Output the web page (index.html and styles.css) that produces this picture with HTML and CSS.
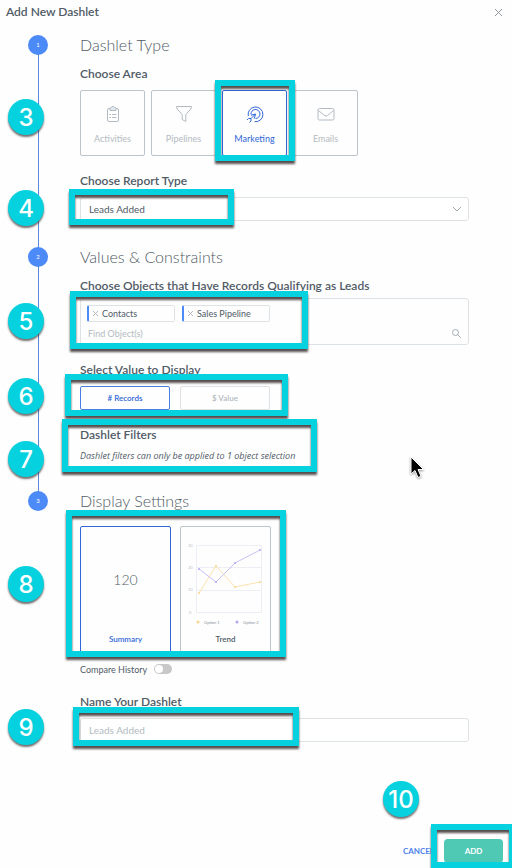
FILE: index.html
```
<!DOCTYPE html>
<html lang="en">

<head>
    <meta charset="UTF-8">
    <meta name="viewport" content="width=device-width, initial-scale=1.0">
    <title>Add New Dashlet</title>
    <link rel="stylesheet" href="styles.css">
</head>

<body>
    <header class="topbar">
        <h1>Add New Dashlet</h1>
        <button class="close" type="button" aria-label="Close">
            <svg width="9" height="9" viewBox="0 0 9 9"><path d="M1 1l7 7M8 1L1 8" /></svg>
        </button>
    </header>

    <form class="dashlet-form">

        <!-- step 1 -->
        <section class="step">
            <span class="bullet">1</span>
            <h2>Dashlet Type</h2>

            <div class="field">
                <h3>Choose Area</h3>
                <div class="areas">
                    <button class="area" type="button">
                        <svg width="18" height="18" viewBox="0 0 18 18">
                            <rect x="3.500" y="3.500" width="11" height="13" rx="1.500" />
                            <path class="clip" d="M6 5.500V3.500Q6 2.500 7.200 2.500Q7.500 1.500 9 1.500T10.800 2.500Q12 2.500 12 3.500V5.500Z" />
                            <path d="M5.500 9.500h1.500M8 9.500h4.500M5.500 12.500h1.500M8 12.500h4.500" />
                        </svg>
                        Activities
                    </button>
                    <button class="area" type="button">
                        <svg width="18" height="18" viewBox="0 0 18 18">
                            <path d="M1.500 1.500H16.500L15.800 4L10.800 9.500V16.500L7.200 14.500V9.500L2.200 4Z" />
                        </svg>
                        Pipelines
                    </button>
                    <button class="area selected" type="button">
                        <svg width="18" height="18" viewBox="0 0 18 18">
                            <path d="M2.300 11A7.400 7.400 0 1 1 8.500 16.700" />
                            <path d="M5 9.500A4.500 4.500 0 1 1 9.500 13.500" />
                            <path d="M9.500 9L5 13.500M9.500 9L5 10.200M9.500 9L8.300 13.500M5 13.500V16L3.500 17.500M5 13.500H2.500L1 15" />
                        </svg>
                        Marketing
                    </button>
                    <button class="area" type="button">
                        <svg width="18" height="18" viewBox="0 0 18 18">
                            <rect x="1" y="3.500" width="16" height="11.500" rx="1.500" />
                            <path d="M1.500 5.500L7.500 10.500Q9 11.700 10.500 10.500L16.500 5.500" />
                        </svg>
                        Emails
                    </button>
                </div>
                <span class="frame frame-3"></span>
                <span class="badge badge-3">3</span>
            </div>

            <div class="field">
                <label for="report">Choose Report Type</label>
                <div class="select-box">
                    <select id="report">
                        <option>Leads Added</option>
                    </select>
                    <svg width="10" height="6" viewBox="0 0 10 6"><path d="M1 1l4 4 4-4" /></svg>
                </div>
                <span class="frame frame-4"></span>
                <span class="badge badge-4">4</span>
            </div>
        </section>

        <!-- step 2 -->
        <section class="step">
            <span class="bullet">2</span>
            <h2>Values &amp; Constraints</h2>

            <div class="field tight">
                <label for="objects">Choose Objects that Have Records Qualifying as Leads</label>
                <div class="objects">
                    <div class="tags">
                        <span class="tag"><button type="button" aria-label="Remove Contacts"><svg width="5" height="5" viewBox="0 0 5 5"><path d="M0 0l5 5M5 0L0 5" /></svg></button>Contacts</span>
                        <span class="tag"><button type="button" aria-label="Remove Sales Pipeline"><svg width="5" height="5" viewBox="0 0 5 5"><path d="M0 0l5 5M5 0L0 5" /></svg></button>Sales Pipeline</span>
                    </div>
                    <div class="search">
                        <input id="objects" type="text" placeholder="Find Object(s)">
                        <svg width="9" height="9" viewBox="0 0 9 9"><circle cx="3.500" cy="3.500" r="3" /><path d="M5.700 5.700L8.700 8.700" /></svg>
                    </div>
                </div>
                <span class="frame frame-5"></span>
                <span class="badge badge-5">5</span>
            </div>

            <div class="field">
                <h3>Select Value to Display</h3>
                <div class="values">
                    <button class="value selected" type="button"># Records</button>
                    <button class="value" type="button">$ Value</button>
                </div>
                <span class="frame frame-6"></span>
                <span class="badge badge-6">6</span>
            </div>

            <div class="field tight">
                <h3>Dashlet Filters</h3>
                <p class="note">Dashlet filters can only be applied to 1 object selection</p>
                <span class="frame frame-7"></span>
                <span class="badge badge-7">7</span>
            </div>
        </section>

        <!-- step 3 -->
        <section class="step">
            <span class="bullet">3</span>
            <h2>Display Settings</h2>

            <div class="field displays-field">
                <div class="displays">
                    <button class="display selected" type="button">
                        <span class="total">120</span>
                        <span class="name">Summary</span>
                    </button>
                    <button class="display" type="button">
                        <svg class="chart" width="76" height="86" viewBox="0 0 76 86">
                            <path class="grid" d="M8.500 2.500H73.500V69.500H8.500ZM8.500 24.500H73.500M8.500 47.500H73.500" />
                            <g class="ticks">
                                <text x="0" y="4">30</text>
                                <text x="0" y="26">20</text>
                                <text x="0" y="48">10</text>
                                <text x="1" y="71">0</text>
                            </g>
                            <path class="one" d="M11 50L28 23L47 44L72 39" />
                            <path class="two" d="M11 26L28 39L47 20L72 7" />
                            <g class="dots-one"><circle cx="11" cy="50" r="1" /><circle cx="28" cy="23" r="1" /><circle cx="47" cy="44" r="1" /><circle cx="72" cy="39" r="1" /></g>
                            <g class="dots-two"><circle cx="11" cy="26" r="1" /><circle cx="28" cy="39" r="1" /><circle cx="47" cy="20" r="1" /><circle cx="72" cy="7" r="1" /></g>
                            <g class="legend">
                                <circle class="dots-one" cx="10" cy="79" r="1.500" />
                                <text x="16" y="81">Option 1</text>
                                <circle class="dots-two" cx="49" cy="79" r="1.500" />
                                <text x="55" y="81">Option 2</text>
                            </g>
                        </svg>
                        <span class="name">Trend</span>
                    </button>
                </div>
                <span class="frame frame-8"></span>
                <span class="badge badge-8">8</span>
            </div>

            <div class="compare">
                <label for="compare">Compare History</label>
                <input id="compare" type="checkbox">
            </div>

            <div class="field">
                <label for="name">Name Your Dashlet</label>
                <input class="text" id="name" type="text" placeholder="Leads Added">
                <span class="frame frame-9"></span>
                <span class="badge badge-9">9</span>
            </div>
        </section>
    </form>

    <footer class="actions">
        <button class="cancel" type="button">CANCEL</button>
        <button class="add" type="button">ADD</button>
        <span class="frame frame-10"></span>
        <span class="badge badge-10">10</span>
    </footer>

    <svg class="pointer" width="15" height="24" viewBox="0 0 15 24">
        <path d="M1 1V18L5 14.500L8 21.500L11 20.200L8 13.500H13.500Z" />
    </svg>
</body>

</html>
```
FILE: styles.css
```
* {
    padding: 0;
    margin: 0;
    box-sizing: border-box;
}

:root {
    --ink: #505b66;
    --muted: #b3bac1;
    --line: #dfe2e5;
    --blue: #2f66d8;
    --bullet: #4c8af8;
    --cyan: #05d2de;
}

body {
    position: relative;
    min-height: 100vh;
    display: flex;
    flex-direction: column;
    overflow-x: hidden;
    font-family: Lato, "Open Sans", sans-serif;
    font-size: 9px;
    color: var(--ink);
    background: #fefefe;
}

button,
input,
select {
    font-family: inherit;
    font-size: inherit;
    color: inherit;
}

button {
    border: none;
    background: none;
}

svg {
    fill: none;
    stroke: currentColor;
}

.topbar {
    display: flex;
    justify-content: space-between;
    align-items: center;
    height: 24px;
    padding: 0 9px 0 6px;
}

.topbar h1,
.field h3,
.field label {
    display: block;
    font-size: 12px;
    font-weight: 600;
    line-height: 16px;
}

.close {
    display: flex;
    color: #8f98a1;
}

.dashlet-form {
    padding: 9px 43px 0 80px;
}

/* steps */
.step {
    position: relative;
    padding-bottom: 24px;
}

.step::before {
    content: "";
    position: absolute;
    left: -42px;
    top: 12px;
    bottom: -12px;
    width: 1px;
    background: #5a86dc;
}

.step:last-child::before {
    display: none;
}

.bullet {
    position: absolute;
    left: -52px;
    top: 2px;
    width: 20px;
    height: 20px;
    border-radius: 50%;
    background: var(--bullet);
    color: #fff;
    font-size: 6px;
    line-height: 20px;
    text-align: center;
}

.step h2 {
    margin-bottom: 9px;
    font-size: 16px;
    font-weight: 300;
    line-height: 24px;
}

.field {
    position: relative;
}

.field + .field,
.compare + .field {
    margin-top: 17px;
}

.field h3,
.field label {
    margin-bottom: 8px;
}

.tight h3,
.tight label {
    margin-bottom: 4px;
}

/* area cards */
.areas {
    display: flex;
    gap: 6px;
}

.area {
    display: flex;
    flex-direction: column;
    align-items: center;
    width: 65px;
    height: 66px;
    padding-top: 14px;
    gap: 10px;
    border: 1px solid #bcc5cb;
    border-radius: 2px;
    color: var(--muted);
    line-height: 12px;
}

.area .clip {
    fill: #e3e9f1;
}

.area.selected {
    border-color: var(--blue);
    color: var(--blue);
}

.select-box {
    position: relative;
}

.select-box select,
.text {
    display: block;
    width: 100%;
    height: 24px;
    padding: 0 8px;
    border: 1px solid var(--line);
    border-radius: 3px;
    background: #fff;
    font-size: 10px;
    appearance: none;
}

.select-box svg {
    position: absolute;
    right: 7px;
    top: 9px;
    color: #a3abb3;
}

::placeholder {
    color: var(--muted);
}

/* object picker */
.objects {
    height: 47px;
    padding: 6px;
    border: 1px solid var(--line);
    border-radius: 3px;
}

.tags {
    display: flex;
    gap: 7px;
}

.tag {
    display: flex;
    align-items: center;
    width: 88px;
    height: 17px;
    padding-left: 4px;
    border: 1px solid var(--line);
    border-left: 2px solid var(--bullet);
    border-radius: 2px;
}

.tag button {
    display: flex;
    margin-right: 4px;
    color: var(--muted);
}

.search {
    display: flex;
    align-items: center;
    padding: 3px 1px;
    color: #a3abb3;
}

.search input {
    flex: 1;
    height: 16px;
    border: none;
    background: none;
}

.values {
    display: flex;
    gap: 10px;
}

.value {
    width: 90px;
    height: 24px;
    border: 1px solid var(--line);
    border-radius: 2px;
    color: var(--muted);
    font-size: 8px;
    font-weight: 600;
}

.value.selected {
    border-color: #4a7ee0;
    color: var(--blue);
}

.note {
    font-family: "Open Sans", sans-serif;
    font-style: italic;
    line-height: 18px;
}

/* display cards */
.displays-field {
    padding-top: 4px;
}

.displays {
    display: flex;
    gap: 9px;
}

.display {
    display: flex;
    flex-direction: column;
    justify-content: flex-end;
    align-items: center;
    width: 91px;
    height: 129px;
    padding-bottom: 9px;
    border: 1px solid #bcc5cb;
    border-radius: 2px;
}

.display.selected {
    border-color: var(--blue);
}

.display .name {
    font-size: 8px;
    font-weight: 600;
    line-height: 12px;
}

.display.selected .name {
    color: var(--blue);
}

.total {
    margin-bottom: 43px;
    font-size: 14px;
    font-weight: 300;
    line-height: 20px;
}

.chart {
    margin-bottom: 4px;
}

.chart text {
    fill: #8a939c;
    stroke: none;
    font-size: 4px;
}

.chart .ticks text {
    fill: #b9bfc6;
}

.grid {
    stroke: #eceef4;
}

.one {
    stroke: #fbe2ae;
}

.two {
    stroke: #c9bff5;
}

.dots-one {
    fill: #f9d68c;
    stroke: none;
}

.dots-two {
    fill: #b3a5f0;
    stroke: none;
}

.compare {
    display: flex;
    align-items: center;
    gap: 7px;
    height: 16px;
    margin-top: 6px;
    margin-bottom: 1px;
}

.compare input {
    appearance: none;
    display: flex;
    align-items: center;
    width: 18px;
    height: 10px;
    padding: 1px;
    border-radius: 5px;
    background: #c8c8c8;
}

.compare input::before {
    content: "";
    width: 8px;
    height: 8px;
    border-radius: 50%;
    background: #fff;
}

/* footer */
.actions {
    position: relative;
    display: flex;
    justify-content: flex-end;
    align-items: center;
    gap: 10px;
    margin-top: auto;
    padding: 0 9px 5px;
    font-size: 8px;
}

.cancel {
    color: #4c82ee;
    font-weight: 700;
}

.add {
    width: 59px;
    height: 24px;
    border-radius: 4px;
    background: #4fc8b4;
    color: #fff;
    font-weight: 700;
}

/* callouts */
.frame {
    position: absolute;
    border: 6px solid var(--cyan);
    filter: drop-shadow(0 3px 1px rgba(70, 60, 60, .9));
    pointer-events: none;
}

.badge {
    position: absolute;
    left: -72px;
    width: 36px;
    height: 36px;
    border-radius: 50%;
    background: var(--cyan);
    box-shadow: 0 2px 2px rgba(60, 50, 50, .7);
    color: #fff;
    font-family: Inter, "Liberation Sans", sans-serif;
    font-size: 24px;
    font-weight: 500;
    line-height: 37px;
    text-align: center;
}

.frame-3 { left: 135px; top: 14px; width: 80px; height: 81px; }
.frame-4 { left: -11px; top: 16px; width: 165px; height: 36px; }
.frame-5 { left: -10px; top: 13px; width: 238px; height: 58px; }
.frame-6 { left: -15px; top: 12px; width: 223px; height: 42px; }
.frame-7 { left: -18px; top: -8px; width: 255px; height: 53px; }
.frame-8 { left: -14px; top: -12px; width: 220px; height: 147px; }
.frame-9 { left: -7px; top: 13px; width: 226px; height: 39px; }
.frame-10 { right: -3px; bottom: 0; width: 84px; height: 44px; }

.badge-3 { top: 33px; }
.badge-4 { top: 17px; }
.badge-5 { top: 25px; }
.badge-6 { top: 16px; }
.badge-7 { top: 14px; }
.badge-8 { top: 44px; }
.badge-9 { top: 15px; }
.badge-10 { left: auto; right: 93px; bottom: 51px; }

.pointer {
    position: absolute;
    left: 410px;
    top: 456px;
    fill: #000;
    stroke: #fff;
    filter: drop-shadow(0 1px 1px rgba(0, 0, 0, .4));
}
```
